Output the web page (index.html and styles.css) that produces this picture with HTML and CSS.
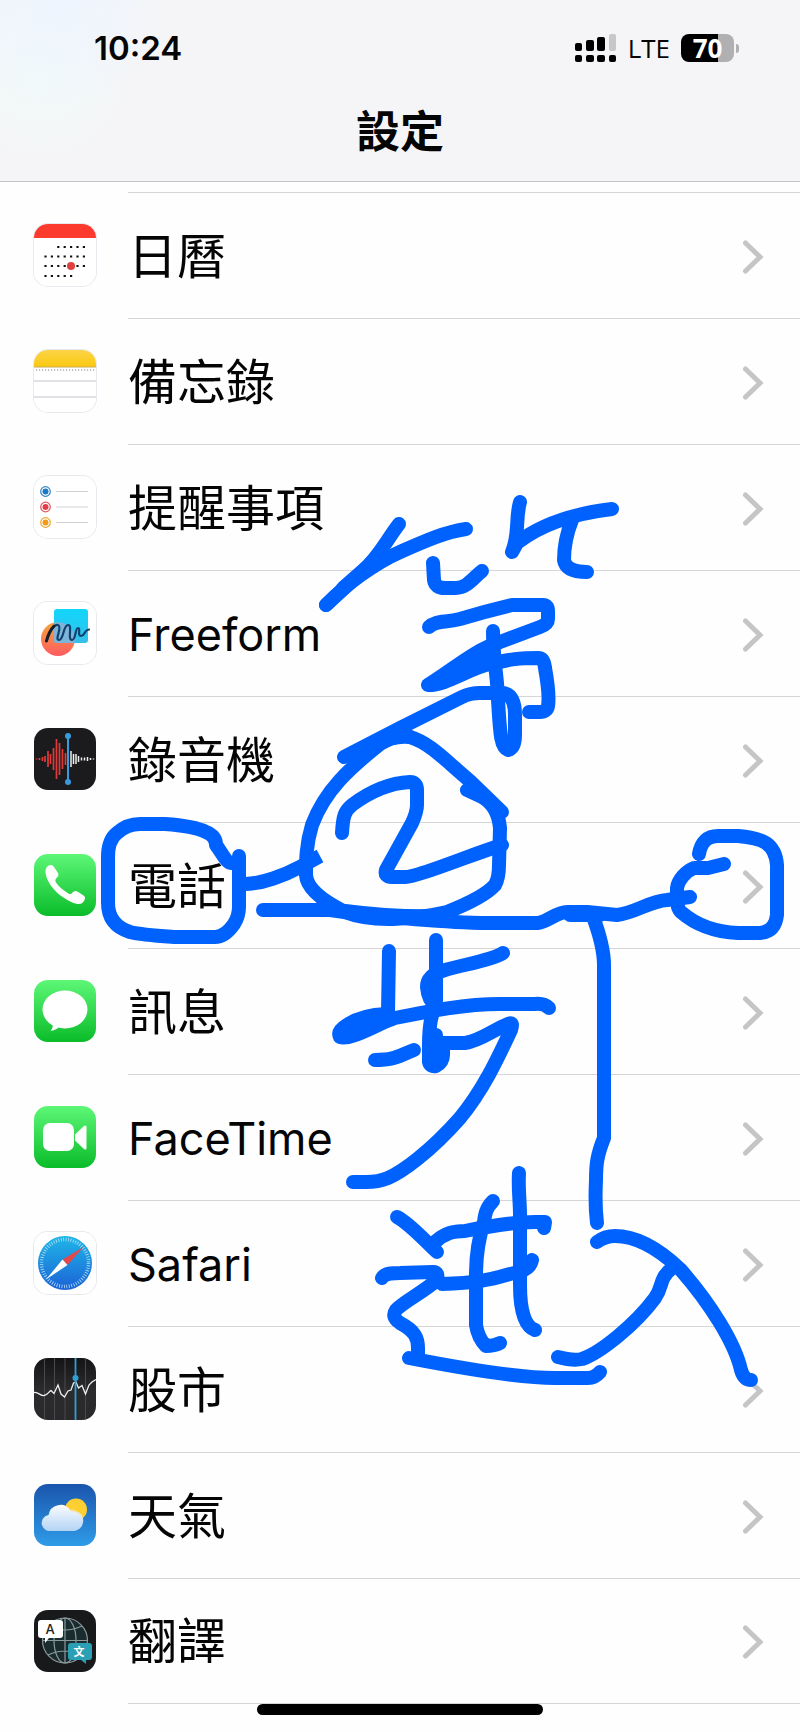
FILE: index.html
```html
<!DOCTYPE html>
<html lang="zh-Hant">

<head>
    <meta charset="UTF-8">
    <meta name="viewport" content="width=device-width, initial-scale=1">

    <title>設定</title>
    <link rel="stylesheet" href="styles.css">
</head>

<body>

    <!-- shared shapes and gradients -->
    <svg class="defs" width="0" height="0" aria-hidden="true">
        <defs>
            <symbol id="chevron" viewBox="0 0 22 36">
                <path d="M3.500 4 L18 18 L3.500 32" fill="none" stroke="#c5c5c7" stroke-width="5" stroke-linecap="round" />
            </symbol>
            <linearGradient id="green" x1="0" y1="0" x2="0" y2="1">
                <stop offset="0" stop-color="#5df777" />
                <stop offset="1" stop-color="#0abc29" />
            </linearGradient>
            <linearGradient id="yellow" x1="0" y1="0" x2="0" y2="1">
                <stop offset="0" stop-color="#fbd447" />
                <stop offset="1" stop-color="#fbc80f" />
            </linearGradient>
            <linearGradient id="cyan" x1="0" y1="0" x2="0" y2="1">
                <stop offset="0" stop-color="#12d6fb" />
                <stop offset="1" stop-color="#35bfe9" />
            </linearGradient>
            <linearGradient id="coral" x1="0" y1="0" x2="0" y2="1">
                <stop offset="0" stop-color="#f8a43a" />
                <stop offset="1" stop-color="#ff5b62" />
            </linearGradient>
            <linearGradient id="compass" x1="0" y1="0" x2="0" y2="1">
                <stop offset="0" stop-color="#1fb6e8" />
                <stop offset="1" stop-color="#1c62d6" />
            </linearGradient>
            <linearGradient id="graphite" x1="0" y1="0" x2="0" y2="1">
                <stop offset="0" stop-color="#141416" />
                <stop offset="0.500" stop-color="#2b2b2d" />
                <stop offset="1" stop-color="#29292b" />
            </linearGradient>
            <linearGradient id="sky" x1="0" y1="0" x2="0" y2="1">
                <stop offset="0" stop-color="#1a55ad" />
                <stop offset="1" stop-color="#2f9ce8" />
            </linearGradient>
            <linearGradient id="cloud" x1="0" y1="0" x2="0" y2="1">
                <stop offset="0" stop-color="#fbfcff" />
                <stop offset="1" stop-color="#b3d3f4" />
            </linearGradient>
        </defs>
    </svg>

    <header class="header">
        <div class="status">
            <time class="clock">10:24</time>
            <div class="indicators">
                <svg class="signal" viewBox="0 0 42 28" aria-hidden="true">
                    <rect x="0" y="9" width="7" height="8" rx="2" />
                    <rect x="11" y="6" width="8" height="11" rx="2" />
                    <rect x="22" y="3" width="8" height="14" rx="2" />
                    <rect x="34" y="0" width="7" height="17" rx="2" fill="#c7c7c9" />
                    <rect x="0" y="21" width="7" height="7" rx="2" />
                    <rect x="11" y="21" width="8" height="7" rx="2" />
                    <rect x="22" y="21" width="8" height="7" rx="2" />
                    <rect x="34" y="21" width="7" height="7" rx="2" />
                </svg>
                <span class="network">LTE</span>
                <span class="battery">70</span>
            </div>
        </div>
        <h1 class="title">設定</h1>
    </header>

    <main>
        <ul class="list">
            <li>
                <a class="row" href="#calendar">
                    <svg class="icon light" viewBox="0 0 62 62" aria-hidden="true">
                        <rect width="62" height="62" fill="#fff" />
                        <rect width="62" height="14" fill="#fc3a2d" />
                        <g stroke="#111" stroke-width="2.200" stroke-linecap="square" stroke-dasharray="0 6.400">
                            <path d="M24.300 23H51" />
                            <path d="M11.500 32.500H51" />
                            <path d="M11.500 42H51" />
                            <path d="M11.500 52H38" />
                        </g>
                        <circle cx="37" cy="42" r="4" fill="#e0403f" />
                    </svg>
                    <span class="body"><span class="label">日曆</span><svg class="chevron" aria-hidden="true"><use href="#chevron" /></svg></span>
                </a>
            </li>
            <li>
                <a class="row" href="#notes">
                    <svg class="icon light" viewBox="0 0 62 62" aria-hidden="true">
                        <rect width="62" height="62" fill="#fff" />
                        <rect width="62" height="17" fill="url(#yellow)" />
                        <path d="M0 17H62" stroke="#c9ac55" />
                        <path d="M2 20H62" stroke="#aaa" stroke-width="1.500" stroke-dasharray="1.200 1.800" />
                        <path d="M0 31H62M0 47H62" stroke="#c6c6ce" stroke-width="1.200" />
                    </svg>
                    <span class="body"><span class="label">備忘錄</span><svg class="chevron" aria-hidden="true"><use href="#chevron" /></svg></span>
                </a>
            </li>
            <li>
                <a class="row" href="#reminders">
                    <svg class="icon light" viewBox="0 0 62 62" aria-hidden="true">
                        <rect width="62" height="62" fill="#fff" />
                        <g stroke-width="1.200" fill="none">
                            <circle cx="11.500" cy="15.500" r="4.800" stroke="#2e84c4" />
                            <circle cx="11.500" cy="31" r="4.800" stroke="#e15662" />
                            <circle cx="11.500" cy="46.500" r="4.800" stroke="#efa62e" />
                        </g>
                        <circle cx="11.500" cy="15.500" r="3" fill="#1c78c4" />
                        <circle cx="11.500" cy="31" r="3" fill="#e03c4b" />
                        <circle cx="11.500" cy="46.500" r="3" fill="#f09a18" />
                        <path d="M22 15.500H54M22 31H54M22 46.500H54" stroke="#d0d0d2" />
                    </svg>
                    <span class="body"><span class="label">提醒事項</span><svg class="chevron" aria-hidden="true"><use href="#chevron" /></svg></span>
                </a>
            </li>
            <li>
                <a class="row" href="#freeform">
                    <svg class="icon light" viewBox="0 0 62 62" aria-hidden="true">
                        <rect width="62" height="62" fill="#fff" />
                        <circle cx="24" cy="37" r="17" fill="url(#coral)" />
                        <rect x="20" y="7" width="34" height="34" rx="3" fill="url(#cyan)" />
                        <path d="M20 20.500A17 17 0 0 1 40.500 41H23Q20 41 20 38Z" fill="#7db4d8" />
                        <path d="M12.500 39C15 31 20 22 24 23C29 25 20 38 25 38C30 38 29 23 34 23C39 23 33 38 38 38C42 38 41 26 44 26C47 26 43 34 47 34C51 34 50 28 55 27.500" fill="none" stroke="#12416f" stroke-width="2.200" stroke-linecap="round" />
                        <path d="M12.500 39C14 33 17 27 20 24" fill="none" stroke="#14202c" stroke-width="3" stroke-linecap="round" />
                    </svg>
                    <span class="body"><span class="label latin">Freeform</span><svg class="chevron" aria-hidden="true"><use href="#chevron" /></svg></span>
                </a>
            </li>
            <li>
                <a class="row" href="#voice-memos">
                    <svg class="icon" viewBox="0 0 62 62" aria-hidden="true">
                        <rect width="62" height="62" fill="#1b1b1e" />
                        <path d="M2.500 30.500v1M5.500 30v2M8.500 29v4M11 28v6M14 23v16M16.500 26v10M19.500 20v22M22.500 11v40M25.500 15v32M28.500 21v20M31.500 25v12" stroke="#df3b3a" stroke-width="1.700" />
                        <path d="M37 23v16M39.500 26v10M42 26v10M44.500 28v6M47.500 29.500v3M50.500 29.500v3M53.500 29v4M56.500 30v2M59.500 30.500v1" stroke="#eee" stroke-width="1.500" />
                        <path d="M34 8V54" stroke="#3a9bdc" stroke-width="2" />
                        <circle cx="34" cy="8" r="3" fill="#3a9bdc" />
                        <circle cx="34" cy="54" r="3" fill="#3a9bdc" />
                    </svg>
                    <span class="body"><span class="label">錄音機</span><svg class="chevron" aria-hidden="true"><use href="#chevron" /></svg></span>
                </a>
            </li>
            <li>
                <a class="row" href="#phone">
                    <svg class="icon" viewBox="0 0 62 62" aria-hidden="true">
                        <rect width="62" height="62" fill="url(#green)" />
                        <path d="M11.500 18C11 14 14 11 16.500 11Q18.500 10.500 20 13L24 19Q25.500 21.500 22.500 24Q20.500 26 22 28.500C25 33 30 37 34.500 39.500Q37 41 38.500 38.500Q40.500 36 43.500 37.500L49.500 41.500Q52 43 50.500 46Q48.500 50.500 44 50C37 49 27 43 21 36.500C15 30 12 24 11.500 18Z" fill="#fff" />
                    </svg>
                    <span class="body"><span class="label">電話</span><svg class="chevron" aria-hidden="true"><use href="#chevron" /></svg></span>
                </a>
            </li>
            <li>
                <a class="row" href="#messages">
                    <svg class="icon" viewBox="0 0 62 62" aria-hidden="true">
                        <rect width="62" height="62" fill="url(#green)" />
                        <ellipse cx="31" cy="29.500" rx="22.500" ry="19" fill="#fff" />
                        <path d="M18 43Q20 47 16.500 51Q23 50 26 46Z" fill="#fff" />
                    </svg>
                    <span class="body"><span class="label">訊息</span><svg class="chevron" aria-hidden="true"><use href="#chevron" /></svg></span>
                </a>
            </li>
            <li>
                <a class="row" href="#facetime">
                    <svg class="icon" viewBox="0 0 62 62" aria-hidden="true">
                        <rect width="62" height="62" fill="url(#green)" />
                        <rect x="9" y="17" width="31" height="28" rx="7" fill="#fff" />
                        <path d="M41 28.500L50 20Q52.500 18.500 52.500 21V42Q52.500 44.500 50 43L41 34.500Z" fill="#fff" />
                    </svg>
                    <span class="body"><span class="label latin">FaceTime</span><svg class="chevron" aria-hidden="true"><use href="#chevron" /></svg></span>
                </a>
            </li>
            <li>
                <a class="row" href="#safari">
                    <svg class="icon light" viewBox="0 0 62 62" aria-hidden="true">
                        <rect width="62" height="62" fill="#fff" />
                        <circle cx="31" cy="31" r="27" fill="url(#compass)" />
                        <circle cx="31" cy="31" r="23.500" fill="none" stroke="#b4e2f6" stroke-width="3.500" stroke-dasharray="0.800 1.660" />
                        <path d="M49.500 15L28.500 27.500L33.500 33Z" fill="#e5484a" />
                        <path d="M12 47.500L28.500 27.500L33.500 33Z" fill="#fff" />
                    </svg>
                    <span class="body"><span class="label latin">Safari</span><svg class="chevron" aria-hidden="true"><use href="#chevron" /></svg></span>
                </a>
            </li>
            <li>
                <a class="row" href="#stocks">
                    <svg class="icon" viewBox="0 0 62 62" aria-hidden="true">
                        <rect width="62" height="62" fill="url(#graphite)" />
                        <path d="M10.500 0V62M20.500 0V62M31 0V62M51.500 0V62" stroke="#4a4a4c" />
                        <path d="M0 34.500C5 34 6 38 10 37.500C14 37 15 33 17 32.500L20 35.500L24 27L27 36L30.500 39L34 33L37 32L39.500 25L42 24L44.500 30L48 27.500L51.500 36L55 27L58 24L62 21.500" fill="none" stroke="#eee" stroke-width="1.300" />
                        <path d="M41.500 0V62" stroke="#2f9fd6" stroke-width="1.800" />
                        <circle cx="41.500" cy="20" r="3" fill="#2f9fd6" />
                    </svg>
                    <span class="body"><span class="label">股市</span><svg class="chevron" aria-hidden="true"><use href="#chevron" /></svg></span>
                </a>
            </li>
            <li>
                <a class="row" href="#weather">
                    <svg class="icon" viewBox="0 0 62 62" aria-hidden="true">
                        <rect width="62" height="62" fill="url(#sky)" />
                        <circle cx="42" cy="25.500" r="11" fill="#fdcf33" />
                        <path d="M17 47A8 8 0 0 1 14.500 31A12 12 0 0 1 36.500 26.500A10 10 0 0 1 41 47Z" fill="url(#cloud)" />
                        <path d="M35 25A11 11 0 0 1 47 34A10 10 0 0 0 37 27Z" fill="#f8df86" />
                    </svg>
                    <span class="body"><span class="label">天氣</span><svg class="chevron" aria-hidden="true"><use href="#chevron" /></svg></span>
                </a>
            </li>
            <li>
                <a class="row" href="#translate">
                    <svg class="icon" viewBox="0 0 62 62" aria-hidden="true">
                        <rect width="62" height="62" fill="#18191b" />
                        <g fill="none" stroke="#8b999b" stroke-width="1.200">
                            <circle cx="31" cy="30.500" r="22.500" fill="#1b2c30" />
                            <ellipse cx="31" cy="30.500" rx="11" ry="22.500" />
                            <path d="M31 8V53M8.500 30.500H53.500M14 16Q31 24 48 16M14 45Q31 37 48 45" />
                        </g>
                        <path d="M7 10H26Q29 10 29 13V25Q29 28 26 28H15L11 33V28H7Q4 28 4 25V13Q4 10 7 10Z" fill="#fff" />
                        <path d="M37 33H55Q58 33 58 36V47Q58 50 55 50H52V54L47 50H37Q34 50 34 47V36Q34 33 37 33Z" fill="#2ba0b4" />
                        <text x="16" y="24" class="glyph" fill="#222">A</text>
                        <text x="45" y="46" class="glyph cjk" fill="#fff">文</text>
                    </svg>
                    <span class="body"><span class="label">翻譯</span><svg class="chevron" aria-hidden="true"><use href="#chevron" /></svg></span>
                </a>
            </li>
        </ul>
    </main>

    <!-- hand-drawn marker notes on top of the list -->
    <svg class="marker" viewBox="0 0 800 1732" role="img" aria-label="第2步 進入">
        <!-- first character -->
        <path d="M399 524C386 541 380 555 363 571L326 605" />
        <path d="M326 605C345 585 375 563 400 552C425 541 445 532 466 529" />
        <path d="M343 588L368 566L380 553" />
        <path d="M433 563L434 580Q435 588 445 588H456C467 588 473 578 482 571" />
        <path d="M520 502C515 520 520 532 512 552L517 543C540 525 570 514 612 509" />
        <path d="M572 520C566 535 564 545 564 560Q566 572 587 572" />
        <path d="M429 627C436 620 445 623 460 619C480 613 495 609 512 605H543Q548 605 548 611V619Q548 624 540 627L500 642C475 650 455 668 428 685C445 686 470 668 490 664C510 659 520 658 538 658Q544 658 545 668C549 690 549 700 548 706Q547 712 540 712H529" />
        <path d="M434 684C448 676 458 669 480 659L492 652" />
        <path d="M493 631C493 660 498 680 498 700C500 730 500 747 508 750Q515 748 515 735V715Q515 695 503 693H480Q470 693 462 697L400 728L344 757" />
        <!-- number in a circle -->
        <path d="M410 737C400 736 390 737 380 744C350 768 325 790 312 825C306 845 306 860 306 875Q307 893 345 912C375 924 420 918 447 912C470 903 486 895 495 885Q499 878 499 865L500 828Q498 806 482 797L467 790" />
        <path d="M355 756L395 736M410 737C430 743 445 760 470 781L502 812M480 791L498 810" />
        <path d="M342 833C343 815 345 811 352 805C372 790 390 783 410 782Q417 782 417 790V805Q417 812 412 823L386 870Q384 877 392 877H405Q412 877 440 867C460 860 480 852 502 845" />
        <!-- box round the label, and the line to the arrow -->
        <path d="M239 856V907Q239 916 234 924Q225 937 215 937H175C160 936 142 935 130 932Q108 925 108 903V857Q108 840 117 833Q127 824 140 824H165C180 825 198 828 206 832Q216 836 216 845C222 853 226 862 231 863" />
        <path d="M245 884C262 884 285 875 300 867L320 856" stroke-linecap="butt" />
        <path d="M263 910H330C370 916 440 922 480 923H538C548 922 556 912 567 912H587L617 915C635 913 650 901 667 900L690 897" />
        <path d="M345 911C375 915 410 917 445 916" />
        <path d="M699 854Q702 836 718 836H738C750 837 760 839 766 843Q776 850 777 865V915Q775 932 760 933H738C715 932 697 926 681 912Q677 908 677 900V888C678 880 686 871 694 868H708L724 864" />
        <path d="M570 915H600" />
        <path d="M592 914C600 935 604 950 604 965V1138C597 1155 596 1165 596 1180C595 1200 596 1215 597 1223" />
        <!-- second character -->
        <path d="M389 951L388 1012" />
        <path d="M436 940V1006" />
        <path d="M503 953C490 961 465 964 445 970Q427 975 427 987Q428 1000 436 1006C430 1015 429 1030 429 1045V1062Q430 1067 436 1066Q443 1062 443 1055V1043H465C480 1041 493 1030 508 1024Q514 1021 511 1030C497 1060 483 1090 460 1118C430 1152 402 1172 388 1178Q378 1182 366 1182H353" />
        <path d="M432 980V1000M436 1035V1058" />
        <path d="M549 1008Q544 1003 535 1004H500C465 1004 430 1011 395 1018C375 1025 350 1041 340 1037Q337 1031 347 1025Q362 1015 386 1014M355 1029L385 1018" />
        <path d="M375 1060C395 1060 398 1056 414 1050" />
        <!-- third character -->
        <path d="M397 1217C410 1224 420 1236 437 1252" />
        <path d="M435 1242C445 1233 453 1231 465 1231C490 1226 515 1222 535 1222H545L544 1228" />
        <path d="M493 1201C486 1208 485 1214 484 1222C478 1240 476 1260 476 1275V1325Q478 1338 486 1346Q494 1346 500 1343" />
        <path d="M519 1173C518 1190 520 1200 520 1215V1285Q520 1325 535 1330" />
        <path d="M532 1260C530 1270 520 1272 510 1274C490 1280 475 1283 442 1284" />
        <path d="M382 1278C385 1273 392 1273 400 1273L433 1272Q439 1272 437 1280C425 1291 403 1302 396 1310Q391 1317 400 1323C415 1331 418 1338 418 1348V1358" />
        <path d="M409 1358C450 1366 520 1378 555 1378H588Q595 1378 600 1372" />
        <!-- fourth character -->
        <path d="M597 1242Q605 1236 615 1236C640 1236 662 1252 680 1269C710 1303 735 1343 741 1370Q744 1380 751 1380" />
        <path d="M672 1268C658 1280 664 1285 655 1298C635 1325 600 1353 582 1359Q573 1361 558 1357" />
    </svg>

    <div class="home-indicator"></div>

</body>

</html>
```
FILE: styles.css
```css
* {
    box-sizing: border-box;
    margin: 0;
    padding: 0;
}

body {
    position: relative;
    min-height: 100vh;
    background-color: #fefefe;
    color: #050505;
    font-family: Inter, "Noto Sans CJK TC", sans-serif;
}

.defs {
    position: absolute;
}

/* header */
.header {
    height: 182px;
    border-bottom: 1px solid #c4c4c6;
    background:
        radial-gradient(circle at 60px 0, #eef5ff, transparent 110px),
        radial-gradient(circle at 40px 70px, #f0faf9, transparent 90px),
        #f5f5f7;
}

.status {
    display: flex;
    justify-content: space-between;
    align-items: center;
    height: 96px;
    padding: 0 61px 0 94px;
}

.clock {
    font-size: 33px;
    font-weight: 600;
}

.indicators {
    display: flex;
    align-items: center;
    gap: 11px;
}

.signal {
    width: 42px;
    height: 28px;
}

.network {
    font-family: "Open Sans", sans-serif;
    font-size: 26px;
    font-weight: 500;
    line-height: 28px;
}

.battery {
    position: relative;
    width: 53px;
    height: 28px;
    margin-right: 5px;
    border-radius: 8px;
    background: linear-gradient(to right, #000 70%, #b0b0b2 70%);
    color: #fff;
    font-family: "Open Sans", sans-serif;
    font-size: 26px;
    font-weight: 700;
    line-height: 28px;
    text-align: center;
}

.battery::after {
    content: "";
    position: absolute;
    top: 10px;
    right: -5px;
    width: 3px;
    height: 9px;
    border-radius: 0 4px 4px 0;
    background-color: #b0b0b2;
}

.title {
    font-size: 44px;
    font-weight: 700;
    line-height: 72px;
    text-align: center;
}

/* list */
.list {
    padding: 10px 0 27px;
    list-style: none;
}

.row {
    display: flex;
    align-items: center;
    gap: 32px;
    padding-left: 34px;
    color: inherit;
    text-decoration: none;
}

.icon {
    flex: none;
    width: 62px;
    height: 62px;
    border-radius: 14px;
}

.icon.light {
    box-shadow: 0 0 0 1px #e8e8ee;
}

.body {
    display: flex;
    flex: 1;
    justify-content: space-between;
    align-items: center;
    height: 126px;
    padding: 2px 36px 0 0;
    border-top: 1px solid #d6d6d8;
}

li:last-child .body {
    border-bottom: 1px solid #d6d6d8;
}

.label {
    font-size: 49px;
    line-height: 60px;
}

.label.latin {
    font-size: 45px;
}

.chevron {
    width: 22px;
    height: 36px;
}

.glyph {
    font-size: 13px;
    font-weight: 500;
    text-anchor: middle;
}

.glyph.cjk {
    font-size: 11px;
    font-weight: 700;
}

/* overlays */
.marker {
    position: absolute;
    top: 0;
    left: 0;
    width: 100%;
    fill: none;
    stroke: #0062fe;
    stroke-width: 14px;
    stroke-linecap: round;
    stroke-linejoin: round;
    pointer-events: none;
}

.home-indicator {
    position: absolute;
    bottom: 17px;
    left: 50%;
    width: 286px;
    height: 11px;
    margin-left: -143px;
    border-radius: 6px;
    background-color: #000;
}
```
